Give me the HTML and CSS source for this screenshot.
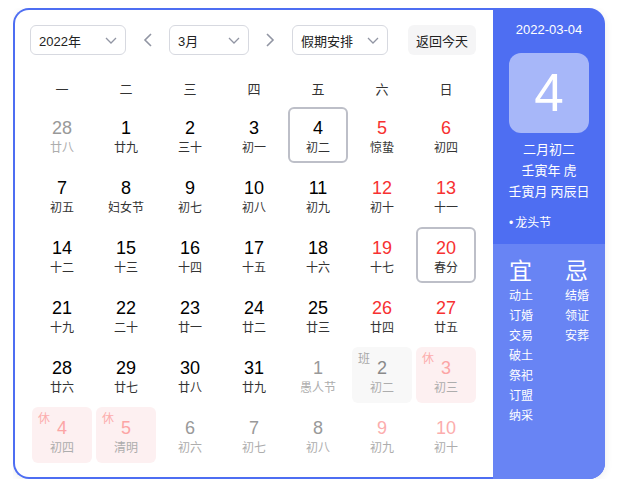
FILE: index.html
```html
<!DOCTYPE html>
<html lang="zh-CN">
<head>
<meta charset="utf-8">
<title>日历</title>
<link rel="stylesheet" href="styles.css">
</head>
<body>
<div class="card">
  <div class="main">
    <div class="toolbar">
      <div class="select sel-year"><span>2022年</span><svg class="chev" width="12" height="7" viewBox="0 0 12 7"><polyline points="1,1 6,6 11,1" fill="none" stroke="#9195a3" stroke-width="1.3"/></svg></div>
      <div class="arrow"><svg width="9" height="14" viewBox="0 0 9 14"><polyline points="8,1 2,7 8,13" fill="none" stroke="#9195a3" stroke-width="1.6"/></svg></div>
      <div class="select sel-month"><span>3月</span><svg class="chev" width="12" height="7" viewBox="0 0 12 7"><polyline points="1,1 6,6 11,1" fill="none" stroke="#9195a3" stroke-width="1.3"/></svg></div>
      <div class="arrow"><svg width="9" height="14" viewBox="0 0 9 14"><polyline points="1,1 7,7 1,13" fill="none" stroke="#9195a3" stroke-width="1.6"/></svg></div>
      <div class="select sel-holiday"><span>假期安排</span><svg class="chev" width="12" height="7" viewBox="0 0 12 7"><polyline points="1,1 6,6 11,1" fill="none" stroke="#9195a3" stroke-width="1.3"/></svg></div>
      <div class="today-btn">返回今天</div>
    </div>
    <div class="weekdays">
      <span>一</span><span>二</span><span>三</span><span>四</span><span>五</span><span>六</span><span>日</span>
    </div>
    <div class="grid">
      <div class="cell other"><div class="box"><span class="num">28</span><span class="lunar">廿八</span></div></div>
      <div class="cell"><div class="box"><span class="num">1</span><span class="lunar">廿九</span></div></div>
      <div class="cell"><div class="box"><span class="num">2</span><span class="lunar">三十</span></div></div>
      <div class="cell"><div class="box"><span class="num">3</span><span class="lunar">初一</span></div></div>
      <div class="cell"><div class="box outlined"><span class="num">4</span><span class="lunar">初二</span></div></div>
      <div class="cell weekend"><div class="box"><span class="num">5</span><span class="lunar">惊蛰</span></div></div>
      <div class="cell weekend"><div class="box"><span class="num">6</span><span class="lunar">初四</span></div></div>

      <div class="cell"><div class="box"><span class="num">7</span><span class="lunar">初五</span></div></div>
      <div class="cell"><div class="box"><span class="num">8</span><span class="lunar">妇女节</span></div></div>
      <div class="cell"><div class="box"><span class="num">9</span><span class="lunar">初七</span></div></div>
      <div class="cell"><div class="box"><span class="num">10</span><span class="lunar">初八</span></div></div>
      <div class="cell"><div class="box"><span class="num">11</span><span class="lunar">初九</span></div></div>
      <div class="cell weekend"><div class="box"><span class="num">12</span><span class="lunar">初十</span></div></div>
      <div class="cell weekend"><div class="box"><span class="num">13</span><span class="lunar">十一</span></div></div>

      <div class="cell"><div class="box"><span class="num">14</span><span class="lunar">十二</span></div></div>
      <div class="cell"><div class="box"><span class="num">15</span><span class="lunar">十三</span></div></div>
      <div class="cell"><div class="box"><span class="num">16</span><span class="lunar">十四</span></div></div>
      <div class="cell"><div class="box"><span class="num">17</span><span class="lunar">十五</span></div></div>
      <div class="cell"><div class="box"><span class="num">18</span><span class="lunar">十六</span></div></div>
      <div class="cell weekend"><div class="box"><span class="num">19</span><span class="lunar">十七</span></div></div>
      <div class="cell weekend"><div class="box outlined"><span class="num">20</span><span class="lunar">春分</span></div></div>

      <div class="cell"><div class="box"><span class="num">21</span><span class="lunar">十九</span></div></div>
      <div class="cell"><div class="box"><span class="num">22</span><span class="lunar">二十</span></div></div>
      <div class="cell"><div class="box"><span class="num">23</span><span class="lunar">廿一</span></div></div>
      <div class="cell"><div class="box"><span class="num">24</span><span class="lunar">廿二</span></div></div>
      <div class="cell"><div class="box"><span class="num">25</span><span class="lunar">廿三</span></div></div>
      <div class="cell weekend"><div class="box"><span class="num">26</span><span class="lunar">廿四</span></div></div>
      <div class="cell weekend"><div class="box"><span class="num">27</span><span class="lunar">廿五</span></div></div>

      <div class="cell"><div class="box"><span class="num">28</span><span class="lunar">廿六</span></div></div>
      <div class="cell"><div class="box"><span class="num">29</span><span class="lunar">廿七</span></div></div>
      <div class="cell"><div class="box"><span class="num">30</span><span class="lunar">廿八</span></div></div>
      <div class="cell"><div class="box"><span class="num">31</span><span class="lunar">廿九</span></div></div>
      <div class="cell other"><div class="box"><span class="num">1</span><span class="lunar">愚人节</span></div></div>
      <div class="cell other work"><div class="box"><span class="tag">班</span><span class="num">2</span><span class="lunar">初二</span></div></div>
      <div class="cell other rest"><div class="box"><span class="tag">休</span><span class="num">3</span><span class="lunar">初三</span></div></div>

      <div class="cell other rest"><div class="box"><span class="tag">休</span><span class="num">4</span><span class="lunar">初四</span></div></div>
      <div class="cell other rest"><div class="box"><span class="tag">休</span><span class="num">5</span><span class="lunar">清明</span></div></div>
      <div class="cell other"><div class="box"><span class="num">6</span><span class="lunar">初六</span></div></div>
      <div class="cell other"><div class="box"><span class="num">7</span><span class="lunar">初七</span></div></div>
      <div class="cell other"><div class="box"><span class="num">8</span><span class="lunar">初八</span></div></div>
      <div class="cell other weekend"><div class="box"><span class="num">9</span><span class="lunar">初九</span></div></div>
      <div class="cell other weekend"><div class="box"><span class="num">10</span><span class="lunar">初十</span></div></div>
    </div>
  </div>
  <div class="side">
    <div class="side-top">
      <div class="side-date">2022-03-04</div>
      <div class="big-day">4</div>
      <div class="side-lunar">
        <div>二月初二</div>
        <div>壬寅年 虎</div>
        <div>壬寅月 丙辰日</div>
      </div>
      <div class="festival"><span class="dot">•</span>龙头节</div>
    </div>
    <div class="side-bottom">
      <div class="yiji">
        <div class="yiji-title">宜</div>
        <div>动土</div><div>订婚</div><div>交易</div><div>破土</div><div>祭祀</div><div>订盟</div><div>纳采</div>
      </div>
      <div class="yiji">
        <div class="yiji-title">忌</div>
        <div>结婚</div><div>领证</div><div>安葬</div>
      </div>
    </div>
  </div>
</div>
</body>
</html>
```

FILE: styles.css
```css
* { box-sizing: border-box; }
body {
  margin: 8px 0 0 13px;
  background: #ffffff;
  font-family: "Liberation Sans", Arial, "Noto Sans CJK SC", sans-serif;
  color: #333;
}
.card {
  width: 592px;
  height: 471px;
  display: flex;
  border-radius: 16px;
  box-shadow: 0 2px 8px rgba(0, 0, 0, 0.08);
}
.main {
  width: 480px;
  flex: none;
  border: 2px solid #4e6ef2;
  border-right: none;
  border-radius: 16px 0 0 16px;
  padding: 15px 0 0 15px;
  background: #fff;
}
.toolbar {
  display: flex;
  align-items: center;
  height: 30px;
}
.select {
  flex: none;
  height: 30px;
  border: 1px solid #d7d9e0;
  border-radius: 6px;
  display: flex;
  align-items: center;
  justify-content: space-between;
  padding: 0 8px 0 8px;
  font-size: 13px;
  color: #222;
}
.sel-year { width: 96px; }
.sel-month { width: 80px; }
.sel-holiday { width: 96px; }
.chev { display: block; }
.arrow {
  flex: none;
  width: 43px;
  height: 30px;
  display: flex;
  align-items: center;
  justify-content: center;
}
.arrow:first-of-type { padding-left: 2px; }
.arrow svg { display: block; }
.today-btn {
  flex: none;
  margin-left: 20px;
  width: 68px;
  height: 30px;
  background: #f5f5f6;
  border-radius: 6px;
  font-size: 13px;
  display: flex;
  align-items: center;
  justify-content: center;
  color: #222;
}
.weekdays {
  margin-top: 18px;
  height: 30px;
  display: grid;
  grid-template-columns: repeat(7, 64px);
  align-items: center;
  font-size: 13px;
  color: #333;
}
.weekdays span { text-align: center; }
.grid {
  margin-top: 2px;
  display: grid;
  grid-template-columns: repeat(7, 64px);
  grid-auto-rows: 60px;
}
.cell { padding: 2px; }
.box {
  position: relative;
  height: 56px;
  border-radius: 6px;
  display: flex;
  flex-direction: column;
  align-items: center;
  justify-content: center;
  padding-top: 4px;
}
.box.outlined { border: 2px solid #bdbfc8; }
.num {
  font-size: 18px;
  line-height: 20px;
  color: #000;
}
.lunar {
  font-size: 12px;
  line-height: 18px;
  color: #333;
  font-family: "Noto Sans CJK SC", sans-serif;
}
.weekend .num { color: #f73131; }
.other .num { color: #999; }
.other .lunar { color: #adadad; }
.other.weekend .num { color: #fcadad; }
.rest .box { background: #fdf0f1; }
.rest .num { color: #fca5a5; }
.work .box { background: #f8f8f8; }
.work .num { color: #8a8a8a; }
.tag {
  position: absolute;
  left: 6px;
  top: 3px;
  font-size: 12px;
  line-height: 16px;
  font-family: "Noto Sans CJK SC", sans-serif;
}
.rest .tag { color: #fcadad; }
.work .tag { color: #a8a8a8; }

.side {
  width: 112px;
  flex: none;
  border-radius: 0 16px 16px 0;
  background: #4e6ef2;
  color: #fff;
  display: flex;
  flex-direction: column;
  overflow: hidden;
}
.side-top {
  padding: 12px 0 11px 16px;
}
.side-date {
  font-size: 13px;
  line-height: 20px;
  text-align: center;
  margin-left: -16px;
}
.big-day {
  margin-top: 13px;
  width: 80px;
  height: 80px;
  border-radius: 12px;
  background: #a7b7f9;
  font-size: 53px;
  line-height: 80px;
  text-align: center;
}
.side-lunar {
  margin-top: 5px;
  margin-left: -16px;
  font-size: 13px;
  line-height: 21px;
  text-align: center;
  font-family: "Noto Sans CJK SC", sans-serif;
}
.festival {
  margin-top: 11px;
  font-size: 12px;
  line-height: 20px;
  font-family: "Noto Sans CJK SC", sans-serif;
}
.dot {
  font-family: "Liberation Sans", sans-serif;
  margin-right: 2px;
}
.side-bottom {
  flex: 1;
  background: #6884f4;
  display: flex;
  padding: 8px 0 0 16px;
}
.yiji {
  flex: none;
  width: 56px;
  font-size: 12px;
  line-height: 20px;
  font-family: "Noto Sans CJK SC", sans-serif;
}
.yiji + .yiji { width: 40px; }
.yiji-title {
  font-size: 23px;
  line-height: 34px;
  margin-bottom: -1px;
}
```
